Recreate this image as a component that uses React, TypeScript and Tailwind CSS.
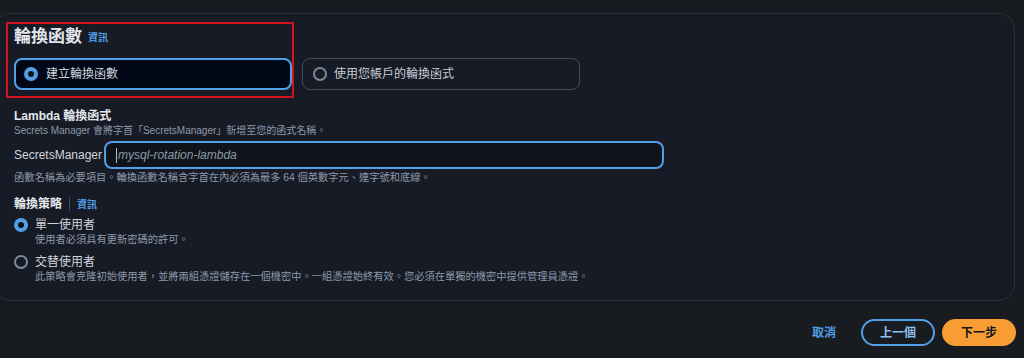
import React from "react";

const font = { fontFamily: '"Liberation Sans", "Noto Sans CJK TC", sans-serif' };

function Radio({ checked }: { checked: boolean }) {
  return checked ? (
    <span className="flex h-[14px] w-[14px] shrink-0 items-center justify-center rounded-full bg-[#539fe5]">
      <span className="h-[6px] w-[6px] rounded-full bg-[#0f141a]" />
    </span>
  ) : (
    <span className="h-[14px] w-[14px] shrink-0 rounded-full border-2 border-[#7d8998]" />
  );
}

function Info() {
  return <span className="text-[10px] font-bold text-[#539fe5]">資訊</span>;
}

export default function App() {
  return (
    <div className="relative h-[358px] w-[1024px] overflow-hidden bg-[#181c21] text-[#d1d5db]" style={font}>
      <div className="ml-[-6px] mr-[9px] mt-[13px] rounded-2xl border border-[#2b313b] bg-[#161b26] pb-4 pl-[19px] pr-5 pt-3">
        <div className="flex h-[22px] items-center gap-[6px]">
          <span className="text-[17px] font-bold text-[#e4e7eb]">輪換函數</span>
          <Info />
        </div>

        <div className="mt-[10px] flex gap-[10px]">
          <div className="flex h-[32px] w-[278px] items-center gap-[8px] rounded-lg border-2 border-[#539fe5] bg-[#000716] px-[8px]">
            <Radio checked />
            <span className="text-[12px] text-[#d1d5db]">建立輪換函數</span>
          </div>
          <div className="flex h-[32px] w-[278px] items-center gap-[7px] rounded-lg border border-[#414d5c] px-[10px]">
            <Radio checked={false} />
            <span className="text-[12px] text-[#c6cbd2]">使用您帳戶的輪換函式</span>
          </div>
        </div>

        <div className="mt-[18px] text-[12px] font-bold leading-4 text-[#e4e7eb]">Lambda 輪換函式</div>
        <div className="text-[10px] leading-[14px] text-[#8d99a8]">
          Secrets Manager 會將字首「SecretsManager」新增至您的函式名稱。
        </div>

        <div className="mt-[3px] flex items-center gap-[2px]">
          <span className="text-[12px] text-[#d1d5db]">SecretsManager</span>
          <div className="flex h-[28px] w-[560px] items-center rounded-lg border-2 border-[#539fe5] bg-[#0f141a] pl-[10px]">
            <span className="mr-[1px] h-[15px] w-px bg-[#b6bec9]" />
            <span className="text-[12px] italic text-[#8d99a8]">mysql-rotation-lambda</span>
          </div>
        </div>
        <div className="mt-[2px] text-[10.25px] leading-[14px] text-[#8d99a8]">
          函數名稱為必要項目。輪換函數名稱含字首在內必須為最多 64 個英數字元、連字號和底線。
        </div>

        <div className="mt-[11px] flex h-4 items-center">
          <span className="text-[12px] font-bold text-[#e4e7eb]">輪換策略</span>
          <span className="mx-[7px] h-[14px] w-px bg-[#414d5c]" />
          <Info />
        </div>

        <div className="mt-[5px] flex h-4 items-center gap-[7px]">
          <Radio checked />
          <span className="text-[12px] text-[#d1d5db]">單一使用者</span>
        </div>
        <div className="pl-[21px] text-[10.25px] leading-[14px] text-[#8d99a8]">使用者必須具有更新密碼的許可。</div>

        <div className="mt-[7px] flex h-4 items-center gap-[7px]">
          <Radio checked={false} />
          <span className="text-[12px] text-[#d1d5db]">交替使用者</span>
        </div>
        <div className="pl-[21px] text-[10.25px] leading-[14px] text-[#8d99a8]">
          此策略會克隆初始使用者，並將兩組憑證儲存在一個機密中。一組憑證始終有效。您必須在單獨的機密中提供管理員憑證。
        </div>
      </div>

      <div className="mr-[8px] mt-[18px] flex items-center justify-end">
        <span className="mr-[25px] text-[12px] font-bold text-[#539fe5]">取消</span>
        <button className="h-[27px] w-[74px] rounded-full border-2 border-[#539fe5] text-[12px] font-bold text-[#8cc0f2]">
          上一個
        </button>
        <button className="ml-[7px] h-[27px] w-[74px] rounded-full bg-[#f89c34] text-[12px] font-bold text-[#0f141a]">
          下一步
        </button>
      </div>

      <div className="pointer-events-none absolute left-[6px] top-[22px] h-[76px] w-[288px] border-2 border-[#d3121c]" />
    </div>
  );
}
